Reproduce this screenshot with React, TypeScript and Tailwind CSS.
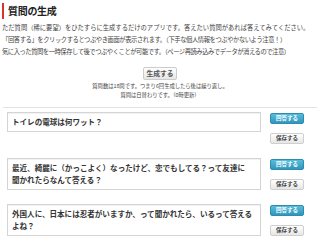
import React from "react";

const font = { fontFamily: '"Noto Sans CJK JP", "Noto Sans", sans-serif' };

const questions = [
  "トイレの電球は何ワット？",
  "最近、綺麗に（かっこよく）なったけど、恋でもしてる？って友達に\n聞かれたらなんて答える？",
  "外国人に、日本には忍者がいますか、って聞かれたら、いるって答えるよね？",
];

function Row({ text }: { text: string }) {
  return (
    <div className="flex items-start mb-[14px]">
      <div className="ml-[7px] w-[254px] whitespace-pre-line border border-[#d4d4d4] bg-white px-[4px] py-[3px] text-[7.55px] leading-[12px] font-bold text-[#333] shadow-[inset_0_1px_1px_rgba(0,0,0,0.06)]">
        {text}
      </div>
      <div className="ml-[9px] flex w-[34px] flex-col gap-[9px] pt-[1px]">
        <div className="flex h-[11px] items-center justify-center rounded-[2px] border border-[#2c8db0] bg-gradient-to-b from-[#58bcdc] to-[#2f97bb] text-[5.5px] font-bold text-white">
          回答する
        </div>
        <div className="flex h-[11px] items-center justify-center rounded-[2px] border border-[#cfcfcf] bg-gradient-to-b from-white to-[#e6e6e6] text-[5.5px] font-bold text-[#444]">
          保存する
        </div>
      </div>
    </div>
  );
}

export default function App() {
  return (
    <div className="w-[320px] h-[241px] overflow-hidden bg-white text-[#333]" style={font}>
      <div className="flex items-center pt-[3px]">
        <div className="ml-[2px] h-[16px] w-[2px] bg-[#d9332b]" />
        <div className="pl-[4px] text-[10px] leading-[16px] font-bold tracking-[-0.3px] text-[#222]">質問の生成</div>
      </div>
      <div className="mt-[3px] pl-[2px] text-[6.3px] leading-[12px] whitespace-nowrap text-[#444]">
        <div>ただ質問（稀に要望）をひたすらに生成するだけのアプリです。答えたい質問があれば答えてみてください。</div>
        <div className="tracking-[-0.42px]">「回答する」をクリックするとつぶやき画面が表示されます。（下手な個人情報をつぶやかないよう注意！）</div>
        <div className="tracking-[-0.46px]">気に入った質問を一時保存して後でつぶやくことが可能です。（ページ再読み込みでデータが消えるので注意）</div>
      </div>
      <div className="mt-[9px] flex justify-center">
        <div className="flex h-[13px] w-[34px] items-center justify-center rounded-[2px] border border-[#cccccc] bg-gradient-to-b from-white to-[#e6e6e6] text-[6.8px] font-bold text-[#555]">
          生成する
        </div>
      </div>
      <div className="mt-[2px] text-center text-[5.3px] leading-[9px] text-[#444]">
        <div>質問数は18問です。つまり6回生成したら後は繰り返し。</div>
        <div>質問は日替わりです。（0時更新）</div>
      </div>
      <div className="mx-[3px] mt-[7px] border-t border-[#e3e3e3]" />
      <div className="mt-[4px]">
        {questions.map((q) => (
          <Row key={q} text={q} />
        ))}
      </div>
    </div>
  );
}
